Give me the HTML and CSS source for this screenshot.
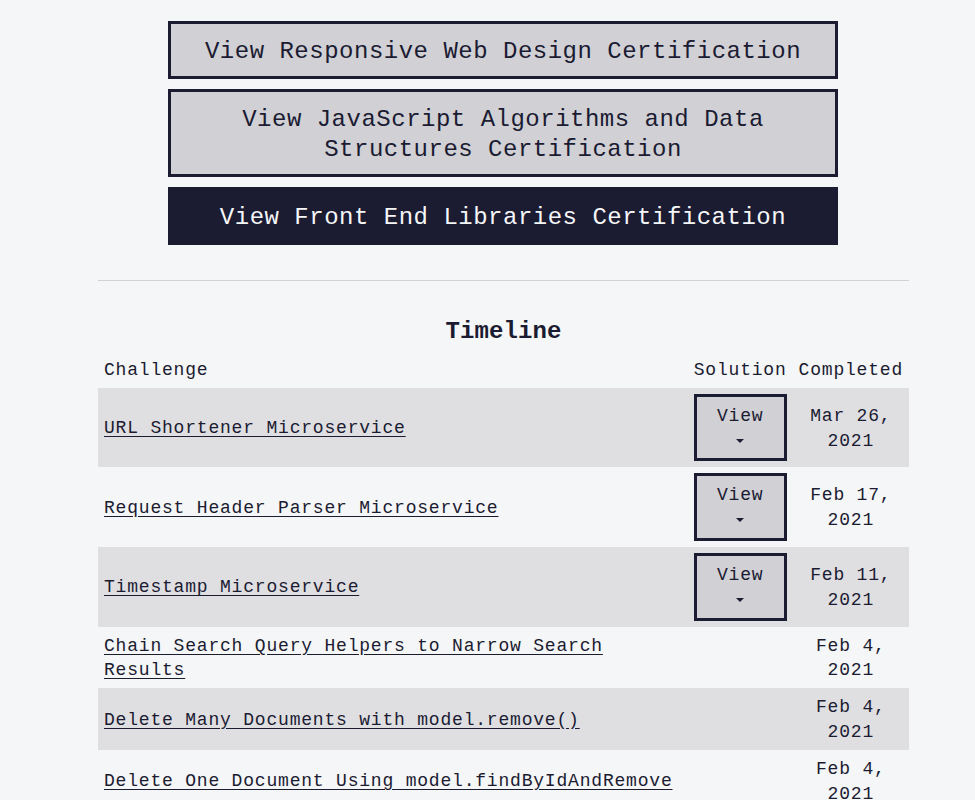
FILE: index.html
```html
<!DOCTYPE html>
<html lang="en">
<head>
<meta charset="utf-8">
<title>Profile</title>
<link rel="stylesheet" href="styles.css">
</head>
<body>
<main class="page">
  <section class="certs">
    <a class="cert-btn" href="#">View Responsive Web Design Certification</a>
    <a class="cert-btn" href="#">View JavaScript Algorithms and Data Structures Certification</a>
    <a class="cert-btn cert-btn-dark" href="#">View Front End Libraries Certification</a>
  </section>
  <hr class="divider">
  <section class="timeline">
    <h2 class="timeline-title">Timeline</h2>
    <table class="timeline-table">
      <thead>
        <tr>
          <th class="col-challenge">Challenge</th>
          <th class="col-solution">Solution</th>
          <th class="col-completed">Completed</th>
        </tr>
      </thead>
      <tbody>
        <tr>
          <td class="cell-challenge"><a href="#">URL Shortener Microservice</a></td>
          <td class="cell-solution"><button class="view-btn" type="button">View<br><span class="caret"></span></button></td>
          <td class="cell-date">Mar 26, 2021</td>
        </tr>
        <tr>
          <td class="cell-challenge"><a href="#">Request Header Parser Microservice</a></td>
          <td class="cell-solution"><button class="view-btn" type="button">View<br><span class="caret"></span></button></td>
          <td class="cell-date">Feb 17, 2021</td>
        </tr>
        <tr>
          <td class="cell-challenge"><a href="#">Timestamp Microservice</a></td>
          <td class="cell-solution"><button class="view-btn" type="button">View<br><span class="caret"></span></button></td>
          <td class="cell-date">Feb 11, 2021</td>
        </tr>
        <tr>
          <td class="cell-challenge"><a href="#">Chain Search Query Helpers to Narrow Search Results</a></td>
          <td class="cell-solution"></td>
          <td class="cell-date">Feb 4, 2021</td>
        </tr>
        <tr>
          <td class="cell-challenge"><a href="#">Delete Many Documents with model.remove()</a></td>
          <td class="cell-solution"></td>
          <td class="cell-date">Feb 4, 2021</td>
        </tr>
        <tr>
          <td class="cell-challenge"><a href="#">Delete One Document Using model.findByIdAndRemove</a></td>
          <td class="cell-solution"></td>
          <td class="cell-date">Feb 4, 2021</td>
        </tr>
      </tbody>
    </table>
  </section>
</main>
</body>
</html>
```

FILE: styles.css
```css
html, body {
  margin: 0;
  padding: 0;
  background: #f5f6f7;
  color: #1b1b32;
  font-family: "Liberation Mono", "DejaVu Sans Mono", monospace;
}

.page {
  width: 811px;
  margin-left: 98px;
  padding-top: 21px;
}

.certs {
  margin: 0 71px 0 70px;
  display: flex;
  flex-direction: column;
  gap: 10px;
}

.cert-btn {
  display: block;
  box-sizing: border-box;
  border: 3px solid #1b1b32;
  background: #d0d0d5;
  color: #1b1b32;
  text-align: center;
  text-decoration: none;
  font-size: 24px;
  letter-spacing: 0.5px;
  line-height: 30px;
  padding: 13px 30px 9px;
}

.cert-btn-dark {
  background: #1b1b32;
  color: #f5f6f7;
}

.divider {
  border: 0;
  height: 1px;
  background: #d0d0d5;
  margin: 35px 0 0;
}

.timeline-title {
  margin: 36px 0 4px;
  text-align: center;
  font-size: 24px;
  line-height: 30px;
  letter-spacing: 0.1px;
  font-weight: bold;
}

.timeline-table {
  width: 100%;
  border-collapse: collapse;
  font-size: 18px;
  letter-spacing: 0.8px;
  line-height: 24.8px;
}

.timeline-table th,
.timeline-table td {
  padding: 7px 6px 5px;
  vertical-align: middle;
}

.timeline-table th {
  font-weight: normal;
  text-align: left;
}

.timeline-table td.cell-solution {
  padding: 6px;
}

.col-solution,
.col-completed {
  width: 1%;
}

.timeline-table tbody tr:nth-child(odd) {
  background: #dfdfe2;
}

.cell-challenge a {
  color: #1b1b32;
  text-decoration: underline;
  text-underline-offset: 3px;
}

.cell-date {
  text-align: center;
}

.view-btn {
  display: block;
  width: 100%;
  box-sizing: border-box;
  border: 3px solid #1b1b32;
  background: #d0d0d5;
  color: #1b1b32;
  font-family: inherit;
  font-size: 18px;
  letter-spacing: 0.8px;
  line-height: 24.8px;
  padding: 7px 0 5px;
  margin: 0;
  text-align: center;
}

.caret {
  display: inline-block;
  width: 0;
  height: 0;
  border-top: 4px solid #1b1b32;
  border-left: 4px solid transparent;
  border-right: 4px solid transparent;
  vertical-align: middle;
}
```
